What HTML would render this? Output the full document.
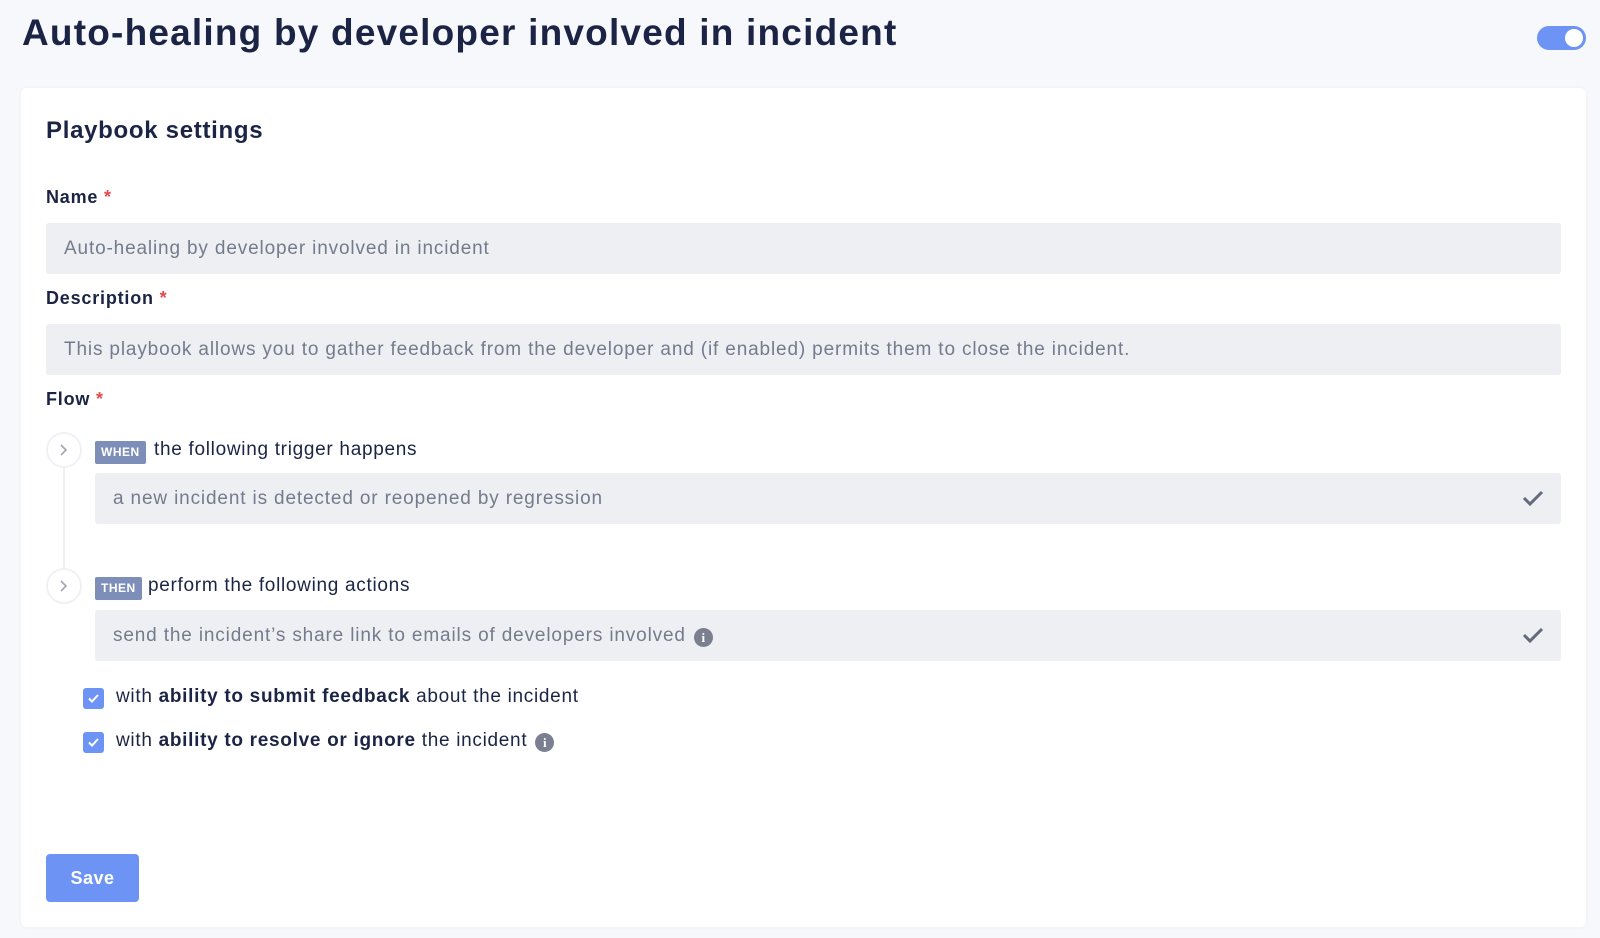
<!DOCTYPE html>
<html><head><style>
*{box-sizing:border-box;margin:0;padding:0}
body{width:1600px;height:938px;background:#f7f8fc;font-family:"Liberation Sans",sans-serif;color:#1d2645;position:relative;overflow:hidden}
.abs{position:absolute}
h1{position:absolute;left:22px;top:12px;font-size:37px;font-weight:bold;color:#1b2444;letter-spacing:1.2px}
.toggle{left:1537px;top:26px;width:49px;height:24px;border-radius:12px;background:#6d94f5}
.toggle:after{content:"";position:absolute;right:3px;top:3px;width:18px;height:18px;border-radius:50%;background:#fff}
.card{left:21px;top:88px;width:1565px;height:839px;background:#fff;border-radius:6px;box-shadow:0 0 4px rgba(0,0,0,0.04)}
.lbl{font-size:18px;font-weight:bold;color:#1b2444;letter-spacing:0.8px}
.lbl span{color:#e5484d}
.inp{background:#eeeff2;border-radius:3px;height:51px;font-size:19px;color:#747b8c;padding-left:18px;line-height:51px;letter-spacing:0.85px}
.circ{width:36px;height:36px;border:2px solid #f0f1f4;border-radius:50%;background:#fff}
.circ svg{position:absolute;left:11px;top:9px}
.badge{background:#7d8fb8;color:#fff;font-size:12px;font-weight:bold;height:23px;line-height:23px;padding:0 6px;border-radius:2px;letter-spacing:0.5px}
.txt{font-size:19px;color:#1b2444;letter-spacing:0.7px}
.cb{width:21px;height:21px;background:#6d94f5;border-radius:3px}
.info{display:inline-block;width:19px;height:19px;border-radius:50%;background:#7a8090;color:#fff;font-size:13px;font-weight:bold;text-align:center;line-height:19px;vertical-align:-1px;margin-left:8px;font-family:"Liberation Serif",serif;letter-spacing:0}
</style></head><body>
<h1>Auto-healing by developer involved in incident</h1>
<div class="abs toggle"></div>
<div class="abs card"></div>
<div class="abs" style="left:46px;top:117px;font-size:24px;font-weight:bold;color:#1b2444;letter-spacing:0.7px">Playbook settings</div>
<div class="abs lbl" style="left:46px;top:187px">Name <span>*</span></div>
<div class="abs inp" style="left:46px;top:223px;width:1515px">Auto-healing by developer involved in incident</div>
<div class="abs lbl" style="left:46px;top:288px">Description <span>*</span></div>
<div class="abs inp" style="left:46px;top:324px;width:1515px">This playbook allows you to gather feedback from the developer and (if enabled) permits them to close the incident.</div>
<div class="abs lbl" style="left:46px;top:389px">Flow <span>*</span></div>
<div class="abs" style="left:63px;top:467px;width:2px;height:103px;background:#eeeff2"></div>
<div class="abs circ" style="left:46px;top:432px"><svg width="10" height="14" viewBox="0 0 10 14"><path d="M2 2l5 5-5 5" fill="none" stroke="#a0a5b2" stroke-width="1.6"/></svg></div>
<div class="abs badge" style="left:95px;top:441px">WHEN</div>
<div class="abs txt" style="left:154px;top:439px">the following trigger happens</div>
<div class="abs inp" style="left:95px;top:473px;width:1466px">a new incident is detected or reopened by regression
<svg class="abs" style="left:1427px;top:17px" width="22" height="17" viewBox="0 0 22 17"><path d="M2 8l6 6L20 2" fill="none" stroke="#636a7b" stroke-width="3"/></svg></div>
<div class="abs circ" style="left:46px;top:568px"><svg width="10" height="14" viewBox="0 0 10 14"><path d="M2 2l5 5-5 5" fill="none" stroke="#a0a5b2" stroke-width="1.6"/></svg></div>
<div class="abs badge" style="left:95px;top:577px">THEN</div>
<div class="abs txt" style="left:148px;top:575px">perform the following actions</div>
<div class="abs inp" style="left:95px;top:610px;width:1466px">send the incident’s share link to emails of developers involved<span class="info">i</span>
<svg class="abs" style="left:1427px;top:17px" width="22" height="17" viewBox="0 0 22 17"><path d="M2 8l6 6L20 2" fill="none" stroke="#636a7b" stroke-width="3"/></svg></div>
<div class="abs cb" style="left:83px;top:688px"><svg width="21" height="21" viewBox="0 0 21 21"><path d="M6 10.5l3 3 6-6.5" fill="none" stroke="#fff" stroke-width="2"/></svg></div>
<div class="abs txt" style="left:116px;top:686px">with <b>ability to submit feedback</b> about the incident</div>
<div class="abs cb" style="left:83px;top:732px"><svg width="21" height="21" viewBox="0 0 21 21"><path d="M6 10.5l3 3 6-6.5" fill="none" stroke="#fff" stroke-width="2"/></svg></div>
<div class="abs txt" style="left:116px;top:730px">with <b>ability to resolve or ignore</b> the incident<span class="info">i</span></div>
<div class="abs" style="left:46px;top:854px;width:93px;height:48px;background:#6d94f5;border-radius:4px;color:#fff;font-weight:bold;font-size:18px;text-align:center;line-height:48px;letter-spacing:0.5px">Save</div>
</body></html>
